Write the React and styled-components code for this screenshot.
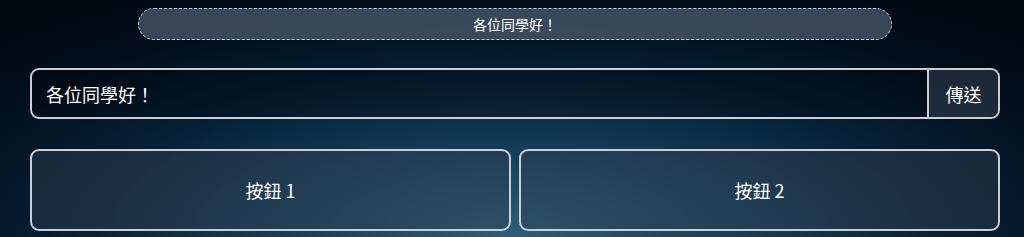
import React from "react";
import styled, { createGlobalStyle } from "styled-components";

const Global = createGlobalStyle`
  html, body { margin: 0; padding: 0; height: 100%; }
  body {
    background: radial-gradient(ellipse 75% 120% at 50% 100%, #2c5d7a 0%, #143e5a 30%, #062239 55%, #020f1e 80%, #010811 100%);
    font-family: "Noto Sans CJK TC", "Noto Sans", sans-serif;
    color: #fff;
    overflow: hidden;
  }
  #root { min-height: 237px; }
`;

const Page = styled.div`
  display: flex;
  flex-direction: column;
  padding: 8px 24px 0 30px;
  box-sizing: border-box;
  width: 1024px;
`;

const Banner = styled.div`
  align-self: center;
  box-sizing: border-box;
  width: 754px;
  height: 32px;
  border: 1px dashed #c9ccd1;
  border-radius: 16px;
  background: rgba(71, 85, 105, 0.8);
  display: flex;
  align-items: center;
  justify-content: center;
  font-size: 14px;
  color: #fff;
`;

const InputRow = styled.form`
  margin-top: 28px;
  display: flex;
  height: 51px;
  box-sizing: border-box;
  border: 2px solid #cdcdd1;
  border-radius: 9px;
  overflow: hidden;
`;

const TextInput = styled.input`
  flex: 1;
  min-width: 0;
  border: none;
  outline: none;
  background: rgba(0, 0, 0, 0.25);
  color: #fff;
  font-family: inherit;
  font-size: 18px;
  padding: 0 14px;
`;

const SendButton = styled.button`
  width: 71px;
  border: none;
  border-left: 2px solid #cdcdd1;
  background: rgba(55, 65, 81, 0.5);
  color: #fff;
  font-family: inherit;
  font-size: 18px;
  padding: 0;
  cursor: pointer;
`;

const ButtonGrid = styled.div`
  margin-top: 30px;
  display: grid;
  grid-template-columns: 1fr 1fr;
  gap: 8px;
`;

const BigButton = styled.button`
  height: 82px;
  box-sizing: border-box;
  border: 2px solid #cdcdd1;
  border-radius: 9px;
  background: rgba(55, 65, 81, 0.42);
  color: #fff;
  font-family: inherit;
  font-size: 18px;
  cursor: pointer;
`;

export default function App() {
  return (
    <>
      <Global />
      <Page>
        <Banner>各位同學好！</Banner>
        <InputRow onSubmit={(e) => e.preventDefault()}>
          <TextInput defaultValue="各位同學好！" />
          <SendButton type="submit">傳送</SendButton>
        </InputRow>
        <ButtonGrid>
          <BigButton>按鈕 1</BigButton>
          <BigButton>按鈕 2</BigButton>
        </ButtonGrid>
      </Page>
    </>
  );
}
